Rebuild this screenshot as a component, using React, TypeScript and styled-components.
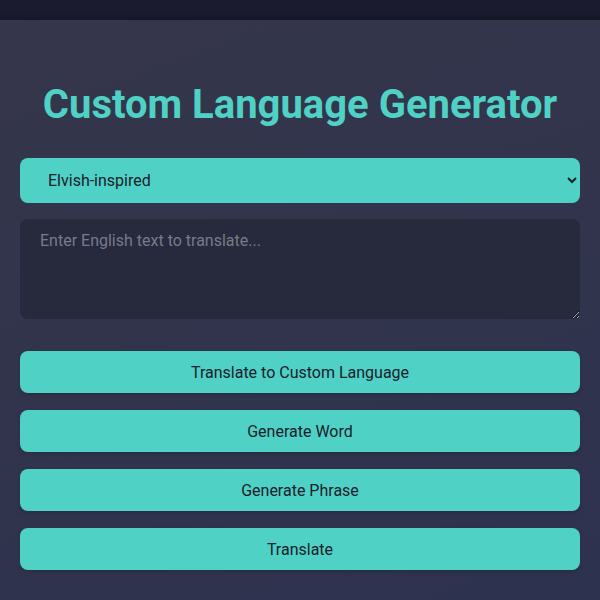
import React, { useState } from 'react';
import styled, { createGlobalStyle } from 'styled-components';

const GlobalStyle = createGlobalStyle`
  html, body {
    margin: 0;
    padding: 0;
    background: #1a1b2f;
    font-family: Roboto, 'Noto Sans', sans-serif;
  }
  * {
    box-sizing: border-box;
  }
`;

const Container = styled.div`
  margin-top: 20px;
  min-height: 620px;
  padding: 41px 20px 40px;
  display: flex;
  flex-direction: column;
  background: linear-gradient(160deg, #35364b 0%, #31344c 50%, #2d3250 100%);
  box-shadow: 0 -2px 6px rgba(0, 0, 0, 0.25);
`;

const Title = styled.h1`
  margin: 20px 0 30px;
  text-align: center;
  font-size: 40px;
  font-weight: 700;
  line-height: 47px;
  color: #4fd1c5;
`;

const Select = styled.select`
  width: 100%;
  height: 45px;
  padding: 0 24px;
  border: none;
  border-radius: 8px;
  background: #4fd1c5;
  color: #1a202c;
  font-family: Roboto, sans-serif;
  font-size: 16px;
  outline: none;
`;

const TextArea = styled.textarea`
  display: block;
  width: 100%;
  height: 100px;
  margin-top: 16px;
  padding: 12px 20px;
  border: none;
  border-radius: 8px;
  background: #262a3c;
  color: #e2e8f0;
  font-family: Roboto, sans-serif;
  font-size: 16px;
  outline: none;

  &::placeholder {
    color: #777a8b;
  }
`;

const Actions = styled.div`
  display: flex;
  flex-direction: column;
  gap: 17px;
  margin-top: 32px;
`;

const Button = styled.button`
  width: 100%;
  height: 42px;
  border: none;
  border-radius: 8px;
  background: #4fd1c5;
  color: #1a202c;
  font-family: Roboto, sans-serif;
  font-size: 16px;
  cursor: pointer;
  box-shadow: 0 2px 4px rgba(0, 0, 0, 0.15);
`;

const actions = ['Translate to Custom Language', 'Generate Word', 'Generate Phrase', 'Translate'];

export default function App(): React.ReactElement {
  const [style, setStyle] = useState('elvish');
  const [text, setText] = useState('');

  return (
    <>
      <GlobalStyle />
      <Container>
        <Title>Custom Language Generator</Title>
        <Select value={style} onChange={(e) => setStyle(e.target.value)}>
          <option value='elvish'>Elvish-inspired</option>
          <option value='dwarvish'>Dwarvish-inspired</option>
          <option value='alien'>Alien</option>
        </Select>
        <TextArea
          placeholder='Enter English text to translate...'
          value={text}
          onChange={(e) => setText(e.target.value)}
        />
        <Actions>
          {actions.map((label) => (
            <Button key={label}>{label}</Button>
          ))}
        </Actions>
      </Container>
    </>
  );
}
